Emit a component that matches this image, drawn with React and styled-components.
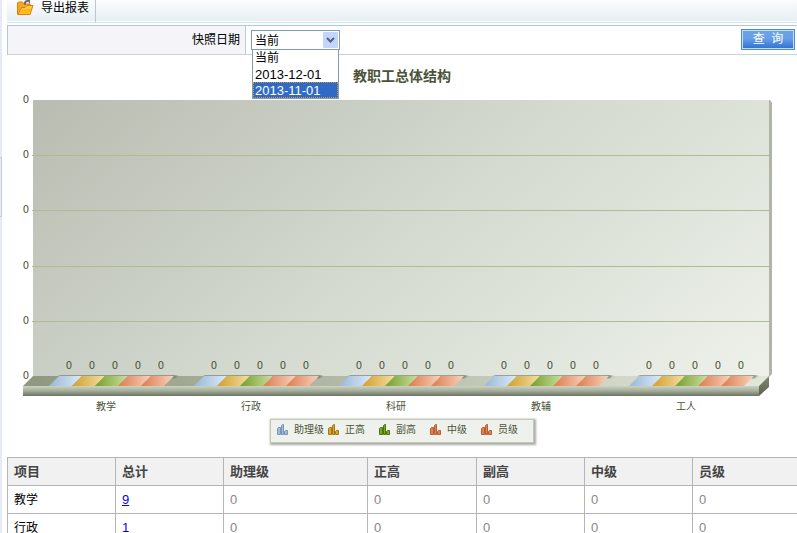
import React from "react";
import styled, { createGlobalStyle } from "styled-components";

const GlobalStyle = createGlobalStyle`
  * { box-sizing: border-box; }
  body {
    margin: 0;
    background: #fff;
    font: 12px/16px "Liberation Sans", "Noto Sans CJK SC", sans-serif;
    color: #000;
  }
`;

const Page = styled.div`
  display: grid;
  grid-template-columns: 2px minmax(0, 1fr);
  column-gap: 5px;
  height: 100vh;
  overflow: hidden;
`;

const SideStrip = styled.div`
  background: #e4ebf7;
  padding-top: 157px;
`;

const SplitHandle = styled.div`
  height: 60px;
  border: 1px solid #c3cfda;
  border-left: 0;
`;

const Content = styled.main`
  min-width: 0;
`;

const Toolbar = styled.header`
  display: flex;
  height: 23px;
  margin-bottom: 2px;
  background: linear-gradient(#fbfcfe, #e6eff3 21px, #fff 21px, #fff 22px, #d2e4ee 22px);
`;

const ExportButton = styled.button`
  display: flex;
  align-items: flex-start;
  gap: 7px;
  width: 89px;
  height: 22px;
  padding: 0 0 0 10px;
  border: 0;
  border-right: 1px solid #b9c6d3;
  background: none;
  color: #000;
  font: inherit;
  white-space: nowrap;
`;

const FilterBar = styled.form`
  display: grid;
  grid-template-columns: 238px 1fr auto;
  align-items: center;
  height: 30px;
  border: 1px solid #ccd2da;
  border-top-color: #b0c8da;
  border-left-color: #b0c8da;
  border-right: 0;
`;

const FilterLabel = styled.label`
  display: flex;
  align-items: center;
  justify-content: flex-end;
  height: 28px;
  padding: 0 5px 0 0;
  border-right: 1px solid #b9cddd;
  background: #f4f4f9;
`;

const SelectWrap = styled.div`
  position: relative;
  width: 89px;
  height: 20px;
  margin-left: 5px;
`;

const Select = styled.select`
  appearance: none;
  display: block;
  width: 100%;
  height: 20px;
  padding: 1px 20px 0 3px;
  border: 1px solid #7f9db9;
  border-radius: 0;
  background: #fff;
  color: #000;
  font: inherit;
`;

const Arrow = styled.svg`
  position: absolute;
  right: 2px;
  top: 2px;
  pointer-events: none;
`;

const Menu = styled.ul`
  position: absolute;
  z-index: 2;
  top: 19px;
  left: 1px;
  width: 87px;
  margin: 0;
  padding: 0;
  list-style: none;
  border: 1px solid #7f9db9;
  background: #fff;
`;

const MenuItem = styled.li`
  height: 16px;
  padding-left: 2px;
  font-size: ${(p) => (p.$date ? 13 : 12)}px;
  line-height: 17px;
  color: ${(p) => (p.$active ? "#fff" : "#000")};
  background: ${(p) => (p.$active ? "#316ac5" : "#fff")};
  outline: ${(p) => (p.$active ? "1px dotted #ce953a" : "none")};
  outline-offset: -1px;
`;

const QueryButton = styled.button`
  width: 54px;
  height: 21px;
  margin: 0 2px 2px 0;
  padding: 0;
  border: 1px solid #4a8bdc;
  box-shadow: inset 0 0 0 1px #c5dcf7;
  background: linear-gradient(#6ba3e8, #66a0e6 45%, #2f70cd);
  color: #fff;
  font: inherit;
  line-height: 17px;
  white-space: pre;
`;

const ChartTitle = styled.h1`
  margin: 0;
  padding: 11px 0 4px;
  font-size: 14px;
  line-height: 20px;
  font-weight: bold;
  text-align: center;
  color: #4b5338;
`;

const ChartSvg = styled.svg`
  display: block;
  width: 100%;
  height: auto;
  text {
    font-family: "DejaVu Sans", "Noto Sans CJK SC", sans-serif;
    font-size: 10px;
    fill: #4b5338;
    text-anchor: middle;
  }
`;

const Legend = styled.ul`
  display: grid;
  grid-template-columns: repeat(5, 51px);
  width: 264px;
  height: 24px;
  margin: 3px auto 14px;
  padding: 0 0 3px 6px;
  align-items: center;
  list-style: none;
  border: 1px solid #c3cab4;
  background: #eff2ec;
  box-shadow: 1px 1px 2px 1px #aaa;
  font-size: 10px;
  color: #4b5338;
`;

const LegendItem = styled.li`
  display: flex;
  align-items: center;
  gap: 6px;
  line-height: 16px;
  white-space: nowrap;
`;

const TableClip = styled.div`
  overflow: hidden;
`;

const Table = styled.table`
  width: 100%;
  min-width: 794px;
  table-layout: fixed;
  border-collapse: collapse;
`;

const Col = styled.col`
  width: ${(p) => p.$w}px;
`;

const Th = styled.th`
  height: 28px;
  padding: 0 6px;
  border: 1px solid #b5b5b5;
  background: #f1f1f1;
  color: #444;
  font-size: 13px;
  text-align: left;
`;

const Td = styled.td`
  height: 28px;
  padding: 0 6px;
  border: 1px solid #b5b5b5;
  font-size: ${(p) => (p.$name ? 12 : 13)}px;
  color: ${(p) => (p.$name ? "#000" : "#888")};
  a { color: #00f; }
`;

const LEVELS = [
  { name: "助理级", dark: "#9fbddb", light: "#dceafa", line: "#7896b8" },
  { name: "正高", dark: "#d6a437", light: "#f3e1a0", line: "#a47a10" },
  { name: "副高", dark: "#7da535", light: "#cce0a0", line: "#4d7606" },
  { name: "中级", dark: "#de8358", light: "#fad2bd", line: "#b95e30" },
  { name: "员级", dark: "#de8358", light: "#fad2bd", line: "#b95e30" },
];
const CATEGORIES = ["教学", "行政", "科研", "教辅", "工人"];
const DATES = ["当前", "2013-12-01", "2013-11-01"];
const COLS = [108, 108, 144, 109, 108, 108];
const ROWS = [
  { name: "教学", total: 9 },
  { name: "行政", total: 1 },
];

function FolderIcon() {
  return (
    <svg width="17" height="16" viewBox="0 0 17 16" aria-hidden="true">
      <path d="M.5 14.5V3l1-1h4l1.500 2H13v3" fill="#f9a61c" stroke="#e87908" />
      <path d="M1 14.500 4.500 7.500H8l2-2h6l-3 9z" fill="#ffcb3b" stroke="#e87908" />
      <path d="M3 13.500 6 9h8l-2 4.500z" fill="#ffb51c" />
      <path d="M8 4.500V3q0-2 3-2" fill="none" stroke="#62686e" strokeWidth="2" />
      <path d="M10 0h3v4z" fill="#62686e" />
    </svg>
  );
}

function LegendIcon({ fill, line }) {
  return (
    <svg width="11" height="11" viewBox="0 0 11 11" aria-hidden="true">
      <g fill={fill} stroke={line}>
        <path d="M.5 10.500v-6l1-1h2v7z" />
        <path d="M4.500 10.500v-9l1-1h1v10z" />
        <path d="M7.500 10.500v-3l1-1h2v4z" />
      </g>
    </svg>
  );
}

function Chart() {
  return (
    <ChartSvg viewBox="7 90 790 326" role="img" aria-label="教职工总体结构">
      <defs>
        <linearGradient id="wall" gradientUnits="userSpaceOnUse" x1="180" y1="-30" x2="620" y2="510">
          <stop offset="0" stopColor="#b8bbb0" />
          <stop offset=".5" stopColor="#d4dad0" />
          <stop offset="1" stopColor="#eef2eb" />
        </linearGradient>
        <linearGradient id="floor">
          <stop offset="0" stopColor="#8f977f" />
          <stop offset="1" stopColor="#e2e7dc" />
        </linearGradient>
        <linearGradient id="base" x2="0" y2="1">
          <stop offset="0" stopColor="#cbd2c1" />
          <stop offset=".5" stopColor="#a3ac98" />
          <stop offset="1" stopColor="#697263" />
        </linearGradient>
        <linearGradient id="edge" x2="0" y2="1">
          <stop offset="0" stopColor="#828975" />
          <stop offset="1" stopColor="#58604e" />
        </linearGradient>
        <filter id="soft"><feGaussianBlur stdDeviation="1" /></filter>
        {LEVELS.map((l, i) => (
          <linearGradient key={i} id={"tile" + i}>
            <stop offset="0.1" stopColor={l.dark} />
            <stop offset="1" stopColor={l.light} />
          </linearGradient>
        ))}
      </defs>
      <path d="M33 100H769V376H33z" fill="url(#wall)" />
      <path d="M769 100h1l2 3v271l-3 3z" fill="#b0b5a8" />
      {[155, 210, 266, 321].map((y) => (
        <path key={y} d={`M32 ${y}.5H769`} stroke="#adbd92" shapeRendering="crispEdges" />
      ))}
      <path d="M23 386 33 376H769L759 386z" fill="url(#floor)" />
      <path d="M23 386H759V396H23z" fill="url(#base)" />
      <path d="M759 386 769 376V387L759 396z" fill="url(#edge)" />
      {[100, 155, 210, 266, 321, 376].map((y) => (
        <text key={y} x="26" y={y + 3}>0</text>
      ))}
      {CATEGORIES.map((name, c) => {
        const x = 49 + c * 145;
        return (
          <g key={name}>
            <path d={`M${x + 10} 376H${x + 126}L${x + 123} 378`} fill="none" stroke="#69705e" strokeWidth="2" filter="url(#soft)" />
            {LEVELS.map((l, i) => (
              <g key={i}>
                <path d={`M${x + i * 23} 386l10-10h23l-10 10z`} fill={`url(#tile${i})`} />
                <text x={x + i * 23 + 20} y="369">0</text>
              </g>
            ))}
            <text x={x + 57} y="410">{name}</text>
          </g>
        );
      })}
    </ChartSvg>
  );
}

export default function App() {
  return (
    <>
      <GlobalStyle />
      <Page>
        <SideStrip><SplitHandle /></SideStrip>
        <Content>
          <Toolbar>
            <ExportButton type="button"><FolderIcon />导出报表</ExportButton>
          </Toolbar>
          <FilterBar onSubmit={(e) => e.preventDefault()}>
            <FilterLabel htmlFor="date">快照日期</FilterLabel>
            <SelectWrap>
              <Select id="date" defaultValue="当前">
                {DATES.map((d) => <option key={d}>{d}</option>)}
              </Select>
              <Arrow width="15" height="16" viewBox="0 0 15 16" aria-hidden="true">
                <rect width="15" height="16" rx="1" fill="#c4d5fb" />
                <path d="m4 6 3.500 3.500L11 6" fill="none" stroke="#4d6185" strokeWidth="2" />
              </Arrow>
              <Menu role="listbox" aria-label="快照日期">
                {DATES.map((d, i) => (
                  <MenuItem key={d} role="option" aria-selected={i === 2} $date={i > 0} $active={i === 2}>{d}</MenuItem>
                ))}
              </Menu>
            </SelectWrap>
            <QueryButton type="submit">查  询</QueryButton>
          </FilterBar>
          <ChartTitle>教职工总体结构</ChartTitle>
          <Chart />
          <Legend>
            {LEVELS.map((l) => (
              <LegendItem key={l.name}><LegendIcon fill={l.dark} line={l.line} />{l.name}</LegendItem>
            ))}
          </Legend>
          <TableClip>
            <Table>
              <colgroup>
                {COLS.map((w, i) => <Col key={i} $w={w} />)}
                <col />
              </colgroup>
              <thead>
                <tr>
                  {["项目", "总计", ...LEVELS.map((l) => l.name)].map((h) => <Th key={h} scope="col">{h}</Th>)}
                </tr>
              </thead>
              <tbody>
                {ROWS.map((r) => (
                  <tr key={r.name}>
                    <Td $name>{r.name}</Td>
                    <Td><a href="#detail">{r.total}</a></Td>
                    {LEVELS.map((l) => <Td key={l.name}>0</Td>)}
                  </tr>
                ))}
              </tbody>
            </Table>
          </TableClip>
        </Content>
      </Page>
    </>
  );
}
